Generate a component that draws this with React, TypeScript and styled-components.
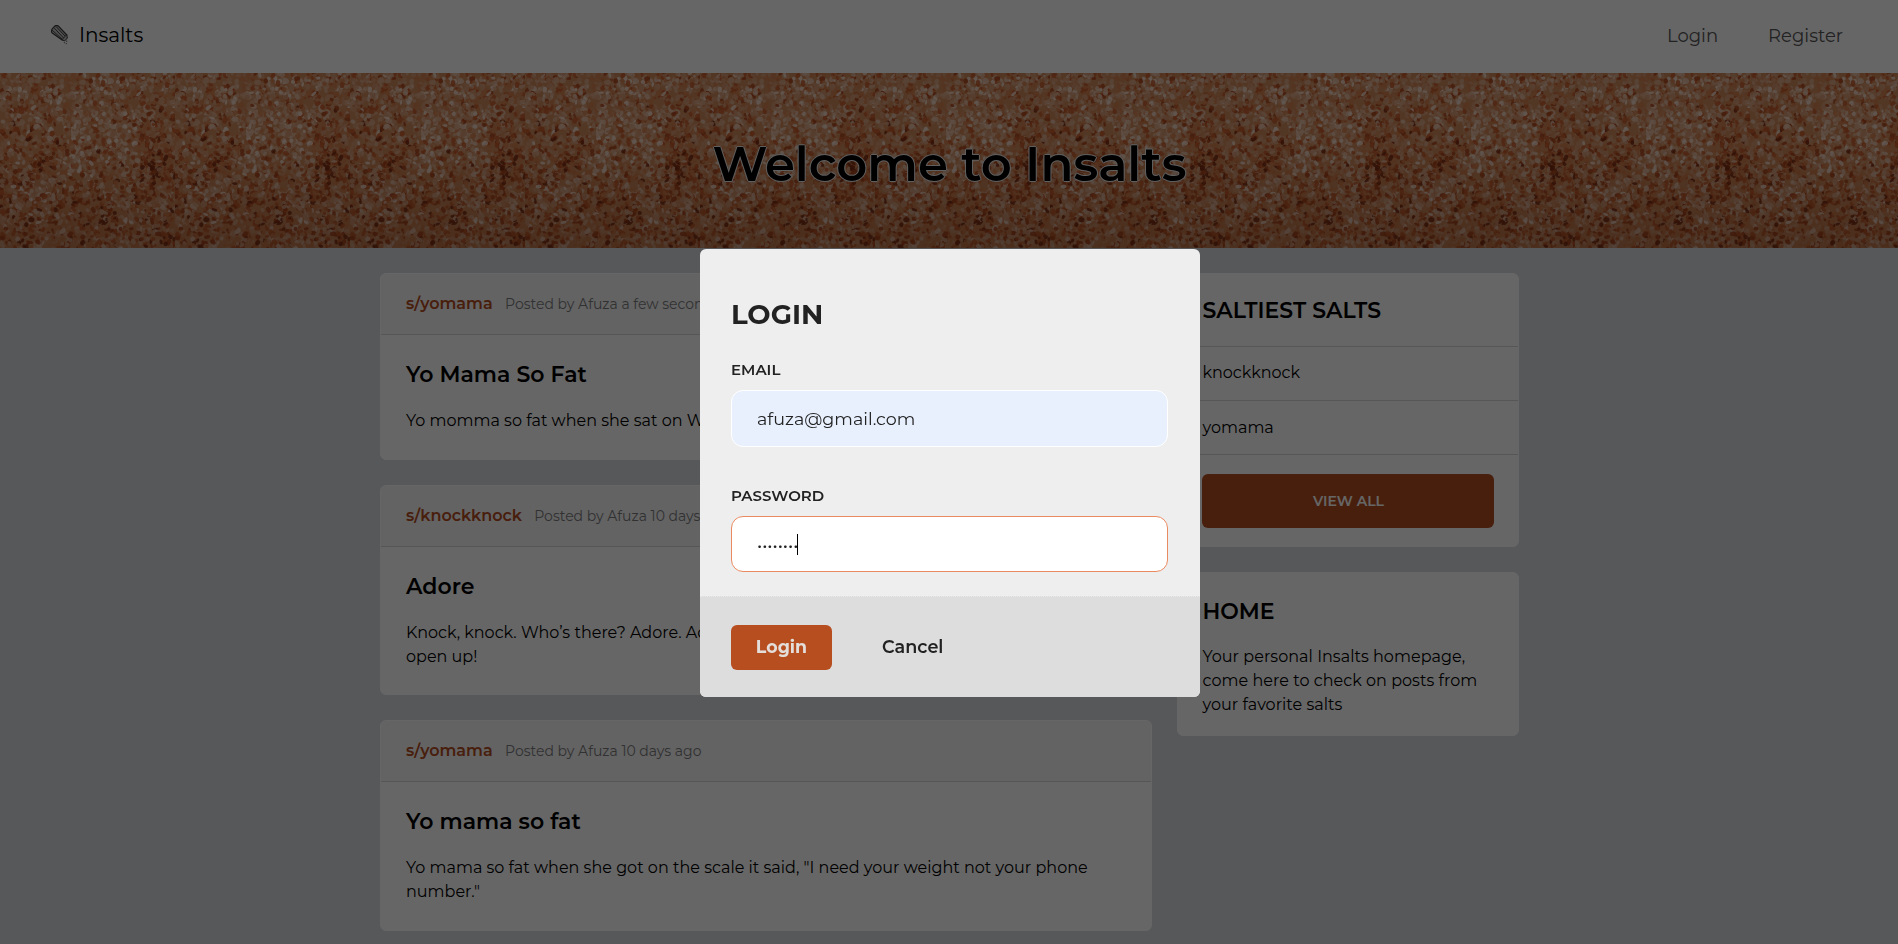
import React from "react";
import styled, { createGlobalStyle } from "styled-components";

const accent = "#b54c1e";

const GlobalStyle = createGlobalStyle`
  *, *::before, *::after { box-sizing: border-box; }
  body {
    margin: 0;
    height: 944px;
    overflow: hidden;
    background: #d9dce0;
    color: #000;
    font: 400 16px/24px Montserrat, Inter, sans-serif;
  }
  h1, h2, h3, p, ul { margin: 0; padding: 0; }
`;

const TopBar = styled.header`
  display: flex;
  align-items: center;
  justify-content: space-between;
  height: 73px;
  padding: 0 55px 4px 50px;
  background: #fff;
`;

const Brand = styled.a`
  display: flex;
  align-items: center;
  gap: 10px;
  font-size: 20px;
`;

const Nav = styled.nav`
  display: flex;
  gap: 50px;
  padding-top: 2px;
`;

const NavLink = styled.a`
  font-size: 18px;
  color: #555;
`;

const Banner = styled.section`
  display: grid;
  height: 175px;
  overflow: hidden;
  place-items: center;

  > * { grid-area: 1 / 1; }
`;

const Texture = styled.svg`
  display: block;
  width: 100%;
  height: 175px;
`;

const BannerTitle = styled.h1`
  position: relative;
  padding: 6px 0 0 1px;
  font-size: 48.1px;
  font-weight: 600;
  line-height: 58px;
  text-shadow: -1px 0 #eee, 1px 0 #eee, 0 -1px #eee, 0 1px #eee;
`;

const Page = styled.main`
  display: grid;
  grid-template-columns: 772px 342px;
  gap: 25px;
  align-items: start;
  width: 1139px;
  margin: 25px auto 0;
`;

const Column = styled.div`
  display: flex;
  flex-direction: column;
  gap: 25px;
`;

const Card = styled.article`
  overflow: hidden;
  border: 1px solid #fff;
  border-radius: 6px;
  background: #fff;
`;

const PostHeader = styled.div`
  display: flex;
  align-items: baseline;
  gap: 12.4px;
  height: 61px;
  padding: 18px 25.5px 0;
  border-bottom: 1px solid #d8d8da;
  background: #f7f7f7;
`;

const SaltLink = styled.a`
  font-weight: 600;
  color: ${accent};
`;

const Meta = styled.span`
  font-size: 14px;
  color: #7c7c7e;
`;

const PostBody = styled.div`
  padding: 26px 25.5px 25.6px;
`;

const Heading = styled.h3<{ $gap?: number }>`
  margin-bottom: ${(p) => p.$gap ?? 0}px;
  font-size: 22px;
  font-weight: 600;
  line-height: 27px;
`;

const Paragraph = styled.p`
  line-height: 24px;
  letter-spacing: 0.01px;
  white-space: pre-line;
`;

const SaltList = styled.ul`
  list-style: none;
`;

const SaltItem = styled.li`
  height: 54px;
  padding: 14px 25px 0;
  border-bottom: 1px solid #d8d8da;

  & + & { padding-top: 15px; }
`;

const ListTitle = styled.div`
  height: 73px;
  padding: 23px 25px 0;
  border-bottom: 1px solid #d8d8da;
`;

const ListFooter = styled.div`
  padding: 19px 24px 18px;
`;

const ViewAll = styled.a`
  display: flex;
  align-items: center;
  justify-content: center;
  height: 54px;
  padding-left: 2px;
  border-radius: 6px;
  background: ${accent};
  color: #fff;
  font-size: 14px;
  font-weight: 600;
`;

const HomeBody = styled.div`
  padding: 24.5px 20px 18px 25px;

  p { letter-spacing: 0.04px; }
`;

const Overlay = styled.div`
  position: fixed;
  inset: 0;
  display: flex;
  align-items: flex-start;
  justify-content: center;
  padding: 249px 0 0 2px;
  background: rgba(0, 0, 0, 0.6);
`;

const Dialog = styled.form`
  width: 500px;
  height: 448px;
  overflow: hidden;
  border-radius: 6px;
  background: #eee;
  color: #222;
`;

const DialogBody = styled.div`
  height: 347px;
  padding: 48px 32px 0 31px;
`;

const DialogTitle = styled.h2`
  font-size: 27.6px;
  font-weight: 700;
  line-height: 34px;
`;

const Label = styled.label<{ $top: number }>`
  display: block;
  margin: ${(p) => p.$top}px 0 8px;
  font-size: 15px;
  font-weight: 600;
  line-height: 24px;
`;

const Field = styled.div<{ $filled?: boolean }>`
  display: flex;
  align-items: center;
  height: ${(p) => (p.$filled ? 57 : 56)}px;
  padding: 0 25px;
  border: 1px solid ${(p) => (p.$filled ? "#fff" : "#e98a60")};
  border-radius: 12px;
  background: ${(p) => (p.$filled ? "#e8f0fe" : "#fff")};
  font-size: 17.5px;
`;

const Dots = styled.span`
  padding-top: 2px;
`;

const Caret = styled.span`
  width: 1px;
  height: 21px;
  margin-left: -1px;
  background: #000;
`;

const DialogFooter = styled.div`
  display: flex;
  align-items: center;
  gap: 50px;
  height: 101px;
  padding: 0 31px;
  border-top: 1px dotted #e8e8e8;
  background: #ddd;
  font-size: 17.6px;
  font-weight: 600;
`;

const Cancel = styled.span`
  padding-bottom: 1px;
`;

const LoginButton = styled.button`
  width: 101px;
  height: 45px;
  padding: 0 0 2px;
  border: 0;
  border-radius: 6px;
  background: #b74e20;
  color: #e4dedb;
  font: 700 17.4px Montserrat, Inter, sans-serif;
`;

const ShakerIcon = () => (
  <svg width="19" height="20" viewBox="0 0 19 20" fill="none" stroke="#3a3a3a" strokeLinecap="round" strokeLinejoin="round">
    <path d="M1.6 6.6 Q1.2 5 2.6 3.4 L5 .9 Q6.6 -.2 8.2 .9 L16.8 10 L12.2 15 L2.6 8.2 Q1.7 7.6 1.6 6.6Z" fill="#c4c4c4" strokeWidth="1.2" />
    <path d="M4 2.8 L13.6 13 M6.2 1.6 L15 11 M2.4 5.4 L12 14" strokeWidth=".9" />
    <path d="M16.8 10 L17.4 13 L14.8 15.8 L12.2 15" fill="#c4c4c4" strokeWidth="1" />
    <path d="M14.4 17.6h.1 M16.6 16.2h.1 M16.2 18.6h.1" stroke="#777" strokeWidth="1.4" />
  </svg>
);

const tileSize = 175;
const tiles = Array.from({ length: 11 }, (_, i) => i * tileSize);
const grainColors = ["#f2dccd", "#e6c0a8", "#dcab8b", "#d69a74", "#d2804f", "#c65c2c", "#ad451c", "#7c2c12"];

/* Clusters of darker (positive) and paler (negative) grains: x, y, radius, weight. */
const clusters = [
  [60, 72, 9, 0.26], [48, 86, 9, 0.2], [37, 98, 9, 0.2], [155, 96, 17, 0.26], [100, 85, 10, 0.16],
  [62, 132, 9, 0.26], [78, 126, 9, 0.26], [95, 129, 8, 0.2], [110, 143, 12, 0.26], [165, 165, 22, 0.2],
  [5, 120, 16, 0.12], [15, 165, 20, 0.12], [165, 45, 14, 0.14], [130, 30, 12, 0.1], [85, 165, 18, 0.1],
  [75, 92, 14, -0.16], [20, 20, 28, -0.08], [100, 30, 22, -0.1], [120, 62, 22, -0.12], [30, 118, 14, -0.14], [75, 55, 12, -0.1],
];

function makeGrains() {
  let seed = 20931;
  const random = () => {
    seed = (seed * 1664525 + 1013904223) % 4294967296;
    return seed / 4294967296;
  };
  return Array.from({ length: 3000 }, (_, id) => {
    const x = random() * tileSize;
    const y = random() * tileSize;
    const tone = clusters.reduce(
      (sum, [cx, cy, r, weight]) => sum + weight * Math.exp(-((x - cx) ** 2 + (y - cy) ** 2) / (r * r)),
      0.46 + (y / tileSize) * 0.04 + (random() + random() - 1) * 0.5,
    );
    const index = Math.max(0, Math.min(grainColors.length - 1, Math.floor(tone * grainColors.length)));
    return { id, x, y, rx: 1.5 + random() * 2, ry: 1.2 + random() * 1.4, turn: Math.round(random() * 180), color: grainColors[index] };
  });
}

const grains = makeGrains();

/* Repeating tile of coarse pink salt. */
const SaltTexture = () => (
  <Texture aria-hidden="true">
    <defs>
      <filter id="soften" x="0" y="0" width="1" height="1" colorInterpolationFilters="sRGB">
        <feGaussianBlur stdDeviation="0.6" />
      </filter>
      <clipPath id="tile">
        <rect width={tileSize} height={tileSize} />
      </clipPath>
      <linearGradient id="shade" x1="0" y1="0" x2="0" y2="1">
        <stop offset="0.4" stopColor="#4a1c0c" stopOpacity="0" />
        <stop offset="1" stopColor="#4a1c0c" stopOpacity="0.16" />
      </linearGradient>
      <g id="salt" clipPath="url(#tile)">
        <rect width={tileSize} height={tileSize} fill="#d08a5c" />
        <g filter="url(#soften)">
          {grains.map((g) => (
            <ellipse key={g.id} rx={g.rx} ry={g.ry} fill={g.color} fillOpacity="0.85" transform={`translate(${g.x.toFixed(1)} ${g.y.toFixed(1)}) rotate(${g.turn})`} />
          ))}
        </g>
        <rect width={tileSize} height={tileSize} fill="url(#shade)" />
      </g>
    </defs>
    {tiles.map((x) => (
      <use key={x} href="#salt" x={x} />
    ))}
  </Texture>
);

type PostProps = { salt: string; age: string; title: string; text: string };

const posts: PostProps[] = [
  { salt: "yomama", age: "a few seconds", title: "Yo Mama So Fat", text: "Yo momma so fat when she sat on Wii" },
  { salt: "knockknock", age: "10 days ago", title: "Adore", text: "Knock, knock. Who’s there? Adore. Adore\nopen up!" },
  { salt: "yomama", age: "10 days ago", title: "Yo mama so fat", text: 'Yo mama so fat when she got on the scale it said, "I need your weight not your phone\nnumber."' },
];

const Post = ({ salt, age, title, text }: PostProps) => (
  <Card>
    <PostHeader>
      <SaltLink>s/{salt}</SaltLink>
      <Meta>Posted by Afuza {age}</Meta>
    </PostHeader>
    <PostBody>
      <Heading $gap={21}>{title}</Heading>
      <Paragraph>{text}</Paragraph>
    </PostBody>
  </Card>
);

export default function App() {
  return (
    <>
      <GlobalStyle />
      <TopBar>
        <Brand>
          <ShakerIcon />
          Insalts
        </Brand>
        <Nav>
          <NavLink>Login</NavLink>
          <NavLink>Register</NavLink>
        </Nav>
      </TopBar>
      <Banner>
        <SaltTexture />
        <BannerTitle>Welcome to Insalts</BannerTitle>
      </Banner>
      <Page>
        <Column>
          {posts.map((post) => (
            <Post key={post.title} {...post} />
          ))}
        </Column>
        <Column>
          <Card>
            <ListTitle>
              <Heading>SALTIEST SALTS</Heading>
            </ListTitle>
            <SaltList>
              <SaltItem>knockknock</SaltItem>
              <SaltItem>yomama</SaltItem>
            </SaltList>
            <ListFooter>
              <ViewAll>VIEW ALL</ViewAll>
            </ListFooter>
          </Card>
          <Card>
            <HomeBody>
              <Heading $gap={20}>HOME</Heading>
              <Paragraph>Your personal Insalts homepage, come here to check on posts from your favorite salts</Paragraph>
            </HomeBody>
          </Card>
        </Column>
      </Page>
      <Overlay>
        <Dialog>
          <DialogBody>
            <DialogTitle>LOGIN</DialogTitle>
            <Label $top={27}>EMAIL</Label>
            <Field $filled>afuza@gmail.com</Field>
            <Label $top={37}>PASSWORD</Label>
            <Field>
              <Dots>••••••••</Dots>
              <Caret />
            </Field>
          </DialogBody>
          <DialogFooter>
            <LoginButton type="button">Login</LoginButton>
            <Cancel>Cancel</Cancel>
          </DialogFooter>
        </Dialog>
      </Overlay>
    </>
  );
}
